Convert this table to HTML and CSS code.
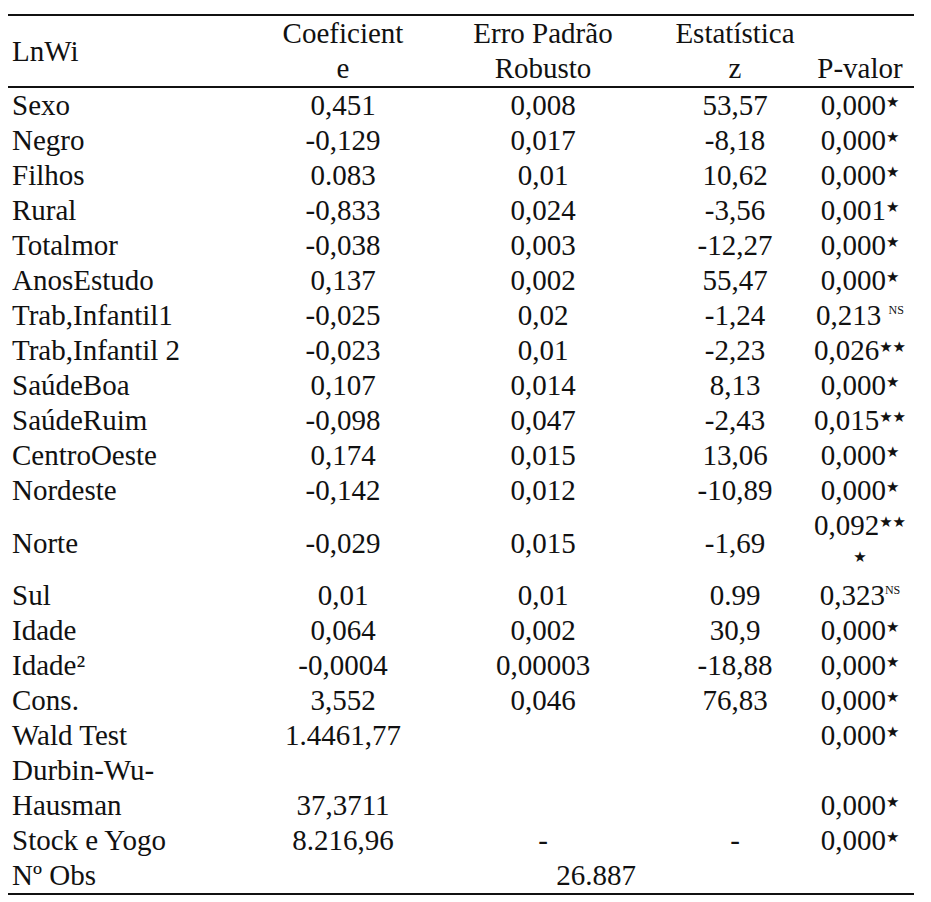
FILE: index.html
```html
<!DOCTYPE html>
<html>
<head>
<meta charset="utf-8">
<title>Resultados</title>
<link rel="stylesheet" href="styles.css">
</head>
<body>
<table class="reg">
  <colgroup>
    <col class="c1"><col class="c2"><col class="c3"><col class="c4"><col class="c5">
  </colgroup>
  <thead>
    <tr>
      <th class="lab mid">LnWi</th>
      <th class="num">Coeficient<br>e</th>
      <th class="num e">Erro Padrão<br>Robusto</th>
      <th class="num">Estatística<br>z</th>
      <th class="num p bot">P-valor</th>
    </tr>
  </thead>
  <tbody>
    <tr><td class="lab">Sexo</td><td>0,451</td><td class="e">0,008</td><td>53,57</td><td class="p">0,000<span class="st">★</span></td></tr>
    <tr><td class="lab">Negro</td><td>-0,129</td><td class="e">0,017</td><td>-8,18</td><td class="p">0,000<span class="st">★</span></td></tr>
    <tr><td class="lab">Filhos</td><td>0.083</td><td class="e">0,01</td><td>10,62</td><td class="p">0,000<span class="st">★</span></td></tr>
    <tr><td class="lab">Rural</td><td>-0,833</td><td class="e">0,024</td><td>-3,56</td><td class="p">0,001<span class="st">★</span></td></tr>
    <tr><td class="lab">Totalmor</td><td>-0,038</td><td class="e">0,003</td><td>-12,27</td><td class="p">0,000<span class="st">★</span></td></tr>
    <tr><td class="lab">AnosEstudo</td><td>0,137</td><td class="e">0,002</td><td>55,47</td><td class="p">0,000<span class="st">★</span></td></tr>
    <tr><td class="lab">Trab,Infantil1</td><td>-0,025</td><td class="e">0,02</td><td>-1,24</td><td class="p">0,213 <span class="ns">NS</span></td></tr>
    <tr><td class="lab">Trab,Infantil 2</td><td>-0,023</td><td class="e">0,01</td><td>-2,23</td><td class="p">0,026<span class="st">★★</span></td></tr>
    <tr><td class="lab">SaúdeBoa</td><td>0,107</td><td class="e">0,014</td><td>8,13</td><td class="p">0,000<span class="st">★</span></td></tr>
    <tr><td class="lab">SaúdeRuim</td><td>-0,098</td><td class="e">0,047</td><td>-2,43</td><td class="p">0,015<span class="st">★★</span></td></tr>
    <tr><td class="lab">CentroOeste</td><td>0,174</td><td class="e">0,015</td><td>13,06</td><td class="p">0,000<span class="st">★</span></td></tr>
    <tr><td class="lab">Nordeste</td><td>-0,142</td><td class="e">0,012</td><td>-10,89</td><td class="p">0,000<span class="st">★</span></td></tr>
    <tr><td class="lab">Norte</td><td>-0,029</td><td class="e">0,015</td><td>-1,69</td><td class="p">0,092<span class="st">★★</span><br><span class="st">★</span></td></tr>
    <tr><td class="lab">Sul</td><td>0,01</td><td class="e">0,01</td><td>0.99</td><td class="p">0,323<span class="ns">NS</span></td></tr>
    <tr><td class="lab">Idade</td><td>0,064</td><td class="e">0,002</td><td>30,9</td><td class="p">0,000<span class="st">★</span></td></tr>
    <tr><td class="lab">Idade²</td><td>-0,0004</td><td class="e">0,00003</td><td>-18,88</td><td class="p">0,000<span class="st">★</span></td></tr>
    <tr><td class="lab">Cons.</td><td>3,552</td><td class="e">0,046</td><td>76,83</td><td class="p">0,000<span class="st">★</span></td></tr>
    <tr><td class="lab">Wald Test</td><td>1.4461,77</td><td class="e"></td><td></td><td class="p">0,000<span class="st">★</span></td></tr>
    <tr class="bot"><td class="lab">Durbin-Wu-<br>Hausman</td><td>37,3711</td><td class="e"></td><td></td><td class="p">0,000<span class="st">★</span></td></tr>
    <tr><td class="lab">Stock e Yogo</td><td>8.216,96</td><td class="e">-</td><td>-</td><td class="p">0,000<span class="st">★</span></td></tr>
    <tr><td class="lab">Nº Obs</td><td colspan="4" class="obs">26.887</td></tr>
  </tbody>
</table>
</body>
</html>
```

FILE: styles.css
```css
html, body {
  margin: 0;
  padding: 0;
  background: #ffffff;
}

body {
  color: #111111;
  font-family: "Liberation Serif", serif;
  font-size: 29px;
}

.reg {
  margin: 14px 0 0 8px;
  width: 906px;
  table-layout: fixed;
  border-collapse: collapse;
  border-top: 2px solid #111;
  border-bottom: 2px solid #111;
  font-family: "Liberation Serif", serif;
  font-size: 29px;
}

.c1 { width: 270px; }
.c2 { width: 130px; }
.c3 { width: 260px; }
.c4 { width: 134px; }
.c5 { width: 112px; }

.reg th,
.reg td {
  padding: 0;
  line-height: 35px;
  text-align: center;
  vertical-align: middle;
  font-weight: normal;
  white-space: nowrap;
}

.reg thead tr {
  border-bottom: 2px solid #111;
}

.reg .lab {
  text-align: left;
  padding-left: 4px;
}

.reg .e {
  padding-left: 10px;
}

.reg .p {
  padding-left: 4px;
}

.reg .bot,
.reg tr.bot td {
  vertical-align: bottom;
}

.reg .mid {
  vertical-align: middle;
}

.reg .st {
  font-family: "DejaVu Sans", sans-serif;
  font-size: 15px;
  vertical-align: 8px;
  line-height: 0;
}

.reg .ns {
  font-size: 12px;
  vertical-align: 11px;
  line-height: 0;
}

.reg .obs {
  text-align: center;
}
```
